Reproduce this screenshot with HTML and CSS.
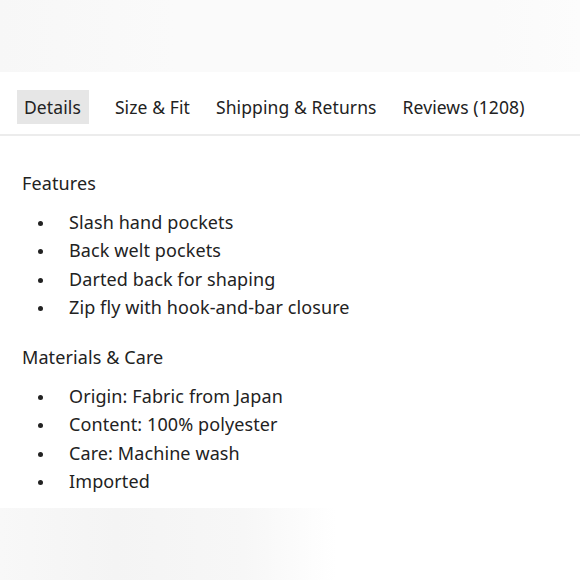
FILE: index.html
```html
<!doctype html>
<html>
<head>
<meta charset="utf-8">
<title>Details</title>
<link rel="stylesheet" href="styles.css">
</head>
<body>
<div class="top"></div>
<div class="tabs">
	<a class="tab on" href="javascript:;">Details</a>
	<a class="tab" href="javascript:;">Size &amp; Fit</a>
	<a class="tab" href="javascript:;">Shipping &amp; Returns</a>
	<a class="tab" href="javascript:;">Reviews (1208)</a>
</div>
<div class="panel">
	<h3>Features</h3>
	<ul>
		<li>Slash hand pockets</li>
		<li>Back welt pockets</li>
		<li>Darted back for shaping</li>
		<li>Zip fly with hook-and-bar closure</li>
	</ul>
	<h3>Materials &amp; Care</h3>
	<ul class="last">
		<li>Origin: Fabric from Japan</li>
		<li>Content: 100% polyester</li>
		<li>Care: Machine wash</li>
		<li>Imported</li>
	</ul>
</div>
<div class="bottom"></div>
</body>
</html>
```

FILE: styles.css
```css
body{margin:0; background:#fff; font-family:"Noto Sans",sans-serif; color:#222; font-size:18px; letter-spacing:0.1px;}
ul{margin:0; padding:0;}
li{list-style:none;}
h3{margin:0; font-weight:normal; font-size:18px;}
.top{height:72px; background:linear-gradient(90deg,#f7f7f7,#fafafa 30%,#fafafa 85%,#fcfcfc);}
.tabs{display:flex; align-items:center; gap:12px; padding:18px 17px 10px; border-bottom:2px solid #ececec; font-size:17.5px;}
.tab{color:#222; text-decoration:none; padding:7px 7px; line-height:20px;}
.tab.on{background:#e6e6e6; margin-right:7px; padding-right:8px;}
.panel{padding:35px 22px 0;}
.panel h3{line-height:24px;}
.panel ul{padding:13px 0 24px;}
.panel ul.last{padding-bottom:13px;}
.panel li{position:relative; padding-left:47px; line-height:28.3px;}
.panel li:before{content:""; position:absolute; left:16px; top:13px; width:5px; height:5px; border-radius:50%; background:#222;}
.bottom{height:75px; background:linear-gradient(90deg,#f8f8f8,#f4f4f4 20%,#f7f7f7 42%,#fff 58%);}
```
